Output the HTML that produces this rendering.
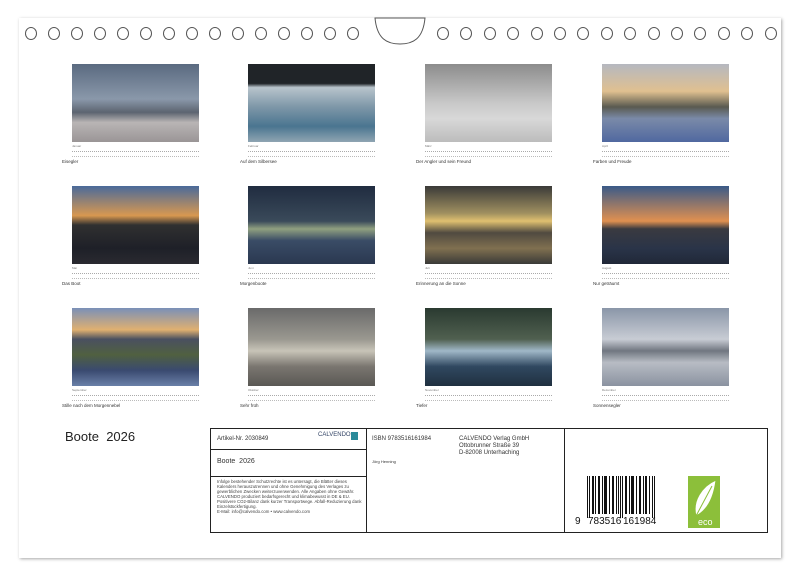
<!DOCTYPE html><html><head><meta charset="utf-8"><style>
body{margin:0;width:800px;height:577px;background:#fff;position:relative;font-family:"Liberation Sans",sans-serif;overflow:hidden}
.page{position:absolute;left:19px;top:18px;width:762px;height:540px;background:#fff;box-shadow:1px 1px 3px rgba(0,0,0,.35)}
.hole{position:absolute;top:27px;width:10px;height:11px;border:1px solid #555;border-radius:50%}
.ph{position:absolute;width:127px;height:78px}
.cal{position:absolute;width:127px;height:12px;font-size:3px;color:#777}
.cal i{display:block;height:4px;margin-top:3px;border-top:1px dotted #aaa;border-bottom:1px dotted #bbb}
.cap{position:absolute;font-size:4.5px;color:#333}
.t{position:absolute;font-size:6px;color:#333}
</style></head><body>
<div class="page"></div>
<svg style="position:absolute;left:373px;top:17px" width="54" height="30"><path d="M2 1 C4 22 14 27 27 27 C40 27 50 22 52 1 Z" fill="#fff" stroke="#555" stroke-width="1"/></svg>
<div id="holes"></div>
<script>
var h='';for(var i=0;i<15;i++){h+='<div class="hole" style="left:'+(25+i*23)+'px"></div>';h+='<div class="hole" style="left:'+(437+i*23.4)+'px"></div>';}
document.getElementById('holes').innerHTML=h;
</script>
<div class="ph" style="left:72px;top:64px;background:linear-gradient(#5a6a80,#8a98aa 45%,#5c6470 62%,#b9b5b5 75%,#9a9596)"></div>
<div class="ph" style="left:248px;top:64px;background:linear-gradient(#202428 0,#202428 25%,#b8c4cc 30%,#7e97a8 55%,#4a7590 80%,#8fa5b2)"></div>
<div class="ph" style="left:425px;top:64px;background:linear-gradient(#8c8c8c,#c8c8c8 50%,#d8d8d8 70%,#bcbcbc)"></div>
<div class="ph" style="left:602px;top:64px;background:linear-gradient(#b5b8c0,#e0c090 35%,#5a5a50 55%,#7a8aa8 70%,#5068a0)"></div>
<div class="ph" style="left:72px;top:186px;background:linear-gradient(#4a6a9a,#d89850 38%,#303030 50%,#1e2028 80%,#2a2a30)"></div>
<div class="ph" style="left:248px;top:186px;background:linear-gradient(#202c40,#3a4a5a 45%,#90a080 55%,#3a4c66 70%,#2a3850)"></div>
<div class="ph" style="left:425px;top:186px;background:linear-gradient(#3a3a38,#a09060 35%,#e0c070 45%,#504a40 60%,#807050 80%,#3a3a38)"></div>
<div class="ph" style="left:602px;top:186px;background:linear-gradient(#3a5a88,#e09050 45%,#3a3a40 55%,#2a3448 80%,#202838)"></div>
<div class="ph" style="left:72px;top:308px;background:linear-gradient(#7a90b8,#e0b070 28%,#4a5060 40%,#506040 60%,#3a4a70 80%,#6a80a8)"></div>
<div class="ph" style="left:248px;top:308px;background:linear-gradient(#6a6a6a,#9a9890 40%,#c8c4b8 55%,#7a7670 75%,#5a5854)"></div>
<div class="ph" style="left:425px;top:308px;background:linear-gradient(#2a3a30,#506050 40%,#a0b8c8 55%,#304860 75%,#203040)"></div>
<div class="ph" style="left:602px;top:308px;background:linear-gradient(#8a96a8,#c8ccd4 40%,#707680 55%,#b8bcc4 70%,#8a92a0)"></div>
<div class="cal" style="left:72px;top:144px">Januar<i></i></div><div class="cal" style="left:248px;top:144px">Februar<i></i></div><div class="cal" style="left:425px;top:144px">März<i></i></div><div class="cal" style="left:602px;top:144px">April<i></i></div>
<div class="cal" style="left:72px;top:266px">Mai<i></i></div><div class="cal" style="left:248px;top:266px">Juni<i></i></div><div class="cal" style="left:425px;top:266px">Juli<i></i></div><div class="cal" style="left:602px;top:266px">August<i></i></div>
<div class="cal" style="left:72px;top:388px">September<i></i></div><div class="cal" style="left:248px;top:388px">Oktober<i></i></div><div class="cal" style="left:425px;top:388px">November<i></i></div><div class="cal" style="left:602px;top:388px">Dezember<i></i></div>
<div class="cap" style="left:62px;top:159px">Eisegler</div><div class="cap" style="left:240px;top:159px">Auf dem Silbersee</div><div class="cap" style="left:416px;top:159px">Der Angler und sein Freund</div><div class="cap" style="left:593px;top:159px">Farben und Freude</div>
<div class="cap" style="left:62px;top:281px">Das Boot</div><div class="cap" style="left:240px;top:281px">Morgenboote</div><div class="cap" style="left:416px;top:281px">Erinnerung an die Sonne</div><div class="cap" style="left:593px;top:281px">Nur geträumt</div>
<div class="cap" style="left:62px;top:403px">Stille nach dem Morgennebel</div><div class="cap" style="left:240px;top:403px">Sehr früh</div><div class="cap" style="left:416px;top:403px">Tiefer</div><div class="cap" style="left:593px;top:403px">Sonnensegler</div>
<div style="position:absolute;left:65px;top:429px;font-size:13px;color:#222">Boote&nbsp; 2026</div>
<div style="position:absolute;left:210px;top:428px;width:556px;height:103px;border:1px solid #222"></div>
<div style="position:absolute;left:366px;top:428px;width:1px;height:105px;background:#222"></div>
<div style="position:absolute;left:564px;top:428px;width:1px;height:105px;background:#222"></div>
<div style="position:absolute;left:210px;top:449px;width:156px;height:1px;background:#222"></div>
<div style="position:absolute;left:210px;top:476px;width:156px;height:1px;background:#222"></div>
<div class="t" style="left:217px;top:436px">Artikel-Nr. 2030849</div>
<div style="position:absolute;left:318px;top:432px;font-size:6px;color:#346">CALVENDO</div><div style="position:absolute;left:351px;top:432px;width:7px;height:8px;background:#2a8a9a"></div>
<div class="t" style="left:217px;top:458px;font-size:7px">Boote&nbsp; 2026</div>
<div style="position:absolute;left:217px;top:479px;width:148px;font-size:4.3px;line-height:5px;color:#444">Infolge bestehender Schutzrechte ist es untersagt, die Blätter dieses Kalenders herauszutrennen und ohne Genehmigung des Verlages zu gewerblichen Zwecken weiterzuverwenden. Alle Angaben ohne Gewähr.<br>CALVENDO produziert bedarfsgerecht und klimabewusst in DE &amp; EU. Positivere CO2-Bilanz dank kurzer Transportwege. Abfall-Reduzierung dank Einzelstückfertigung.<br>E-Mail: info@calvendo.com • www.calvendo.com</div>
<div class="t" style="left:372px;top:436px">ISBN 9783516161984</div>
<div class="t" style="left:459px;top:436px;line-height:7px">CALVENDO Verlag GmbH<br>Ottobrunner Straße 39<br>D-82008 Unterhaching</div>
<div class="t" style="left:372px;top:459px;font-size:4px">Jörg Henning</div>
<svg style="position:absolute;left:574px;top:476px" width="96" height="52"><g fill="#111" transform="translate(8,0)">
<rect x="5" y="0" width="1" height="42"/><rect x="7" y="0" width="1" height="42"/><rect x="10" y="0" width="2" height="38"/><rect x="13" y="0" width="1" height="38"/><rect x="16" y="0" width="2" height="38"/><rect x="20" y="0" width="1" height="38"/><rect x="22" y="0" width="3" height="38"/><rect x="27" y="0" width="1" height="38"/><rect x="30" y="0" width="2" height="38"/><rect x="34" y="0" width="1" height="38"/><rect x="36" y="0" width="1" height="38"/><rect x="38" y="0" width="1" height="42"/><rect x="40" y="0" width="1" height="42"/><rect x="43" y="0" width="2" height="38"/><rect x="47" y="0" width="1" height="38"/><rect x="49" y="0" width="3" height="38"/><rect x="54" y="0" width="1" height="38"/><rect x="57" y="0" width="2" height="38"/><rect x="61" y="0" width="1" height="38"/><rect x="63" y="0" width="2" height="38"/><rect x="67" y="0" width="1" height="38"/><rect x="70" y="0" width="1" height="42"/><rect x="72" y="0" width="1" height="42"/></g>
<text x="1" y="48" font-size="10" font-family="Liberation Sans" fill="#111">9</text><text x="14" y="48" font-size="10" font-family="Liberation Sans" fill="#111">783516</text><text x="49" y="48" font-size="10" font-family="Liberation Sans" fill="#111">161984</text></svg>
<div style="position:absolute;left:688px;top:476px;width:32px;height:52px;background:#8cbf3a"></div>
<svg style="position:absolute;left:688px;top:476px" width="32" height="52"><path d="M8 40 C4 25 14 10 28 4 C26 20 20 34 8 40 Z M8 40 L24 10" fill="#fff" stroke="#8cbf3a" stroke-width="1"/><text x="10" y="49" font-size="9" fill="#fff" font-family="Liberation Sans">eco</text></svg>
</body></html>
